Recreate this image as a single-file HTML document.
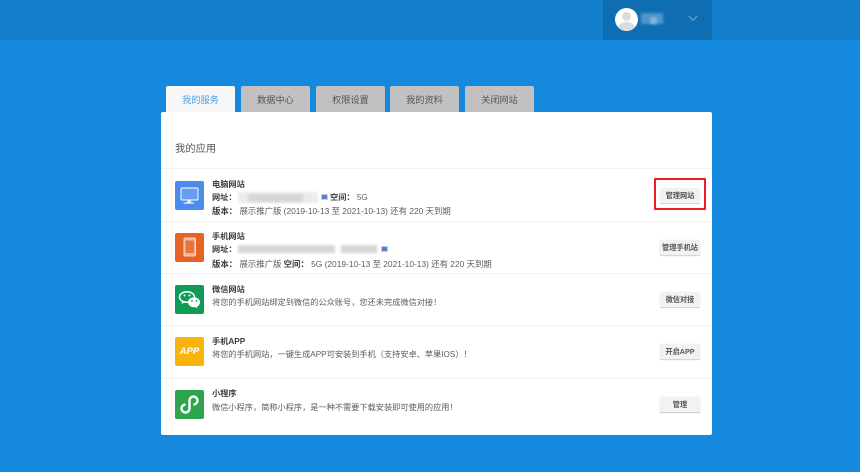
<!DOCTYPE html>
<html lang="zh"><head><meta charset="utf-8"><title>我的服务</title>
<style>
html,body{margin:0;padding:0}
body{width:860px;height:472px;overflow:hidden;position:relative;background:#1589dd;font-family:"Liberation Sans","Noto Sans CJK SC",sans-serif;color:#555}
div,span{position:absolute;white-space:nowrap}
.hdr{left:0;top:0;width:860px;height:40px;background:#1480cd}
.user{left:603px;top:0;width:109px;height:40px;background:#0f6eb2}
.tab{top:86px;width:69px;height:26px;background:#c1c1c1;border-radius:2px 2px 0 0;font-size:9.2px;line-height:28px;text-align:center;color:#555;filter:blur(.25px)}
.card{left:161px;top:112px;width:551px;height:323px;background:#fff;border-radius:2px}
.hr{left:161px;width:551px;height:1px;background:#f2f2f2}
.ic{left:175px;width:29px;height:29px;border-radius:2px}
.ic svg{position:absolute;left:0;top:0}
.t{left:212px;font-size:8.2px;line-height:10px;color:#3c3c3c;font-weight:bold}
.l{left:212px;font-size:8.2px;line-height:10px;color:#5c5c5c}
.v{font-size:8.4px}
.l b{color:#3c3c3c}
.btn{left:660px;width:40px;height:15px;background:#f2f2f2;box-shadow:0 1px 1px #ccc,0 0 1px #ddd;border-radius:1px;font-size:7.2px;line-height:16px;text-align:center;font-weight:bold;color:#555;filter:blur(.2px)}
.bl{background:#d6d6d6;filter:blur(1.3px)}
.lk{width:7px;height:6px;background:#5b7fc4;border:1px solid #c3d0ea;box-sizing:border-box}
.txt{filter:blur(.28px)}
</style></head><body>
<div class="hdr"></div>
<div class="user"></div>
<div style="left:615px;top:8px;width:23px;height:23px;border-radius:50%;background:#fff;overflow:hidden">
<span style="left:7px;top:4px;width:9px;height:9px;border-radius:50%;background:#dcdcdc"></span>
<span style="left:3px;top:14px;width:17px;height:12px;border-radius:50%;background:#dcdcdc"></span>
</div>
<div style="left:641px;top:13px;width:22px;height:11px;background:#4f96ca;filter:blur(1.2px)"></div>
<div style="left:650px;top:17px;width:7px;height:7px;background:#80b4da;filter:blur(1px)"></div>
<svg style="position:absolute;left:688px;top:15px" width="10" height="7" viewBox="0 0 10 7"><path d="M.8 1 5 5.200 9.200 1" fill="none" stroke="#6fa8d0" stroke-width="1.100"/></svg>

<div class="tab" style="left:166px;background:#f7f7f7;color:#4a9fe6">我的服务</div>
<div class="tab" style="left:241px">数据中心</div>
<div class="tab" style="left:316px">权限设置</div>
<div class="tab" style="left:390px">我的资料</div>
<div class="tab" style="left:465px">关闭网站</div>

<div class="card"></div>
<div class="txt" style="left:175px;top:142px;font-size:10.3px;line-height:15px;color:#555">我的应用</div>
<div class="hr" style="top:168px"></div>
<div class="hr" style="top:221px"></div>
<div class="hr" style="top:273px"></div>
<div class="hr" style="top:325px"></div>
<div class="hr" style="top:378px"></div>

<div class="ic" style="top:181px;background:#4a8bec"><svg width="29" height="29" viewBox="0 0 29 29"><rect x="6" y="7" width="17" height="12" rx="1" fill="#689df0" stroke="#e3ecfb" stroke-width="1.200"/><path d="M13 19.500h3l.5 2h2.500v1.200h-10.500v-1.200h2.500z" fill="#e3ecfb"/></svg></div>
<div class="ic" style="top:233px;background:#e66225"><svg width="29" height="29" viewBox="0 0 29 29"><rect x="9" y="5" width="11.500" height="18" rx="1.500" fill="#f2b597" stroke="#f7d3c0"/><rect x="10.500" y="7.500" width="8.500" height="12.500" fill="#e8743c"/></svg></div>
<div class="ic" style="top:285px;background:#0d9b57"><svg width="29" height="29" viewBox="0 0 29 29"><ellipse cx="12" cy="12" rx="7.500" ry="5.300" fill="none" stroke="#fff" stroke-width="1.500"/><path d="M7 15.500l-.5 3.500 4-2z" fill="#fff"/><ellipse cx="19" cy="17.300" rx="6" ry="5" fill="#fff"/><path d="M21.500 21l1.500 2-4-1.200z" fill="#fff"/><circle cx="9.500" cy="10.500" r="1" fill="#fff"/><circle cx="14.500" cy="10.500" r="1" fill="#fff"/><circle cx="17" cy="16" r=".9" fill="#0d9b57"/><circle cx="21.500" cy="16" r=".9" fill="#0d9b57"/></svg></div>
<div class="ic" style="top:337px;background:#f9b40c;color:#fff;font:italic bold 9.500px/29px 'Liberation Sans',sans-serif;text-align:center">APP</div>
<div class="ic" style="top:390px;background:#2ea44c"><svg width="29" height="29" viewBox="0 0 29 29"><path d="M14.500 18.500V10.500a4 4 0 1 1 4 4M14.500 18.500a4 4 0 1 1-4-4" fill="none" stroke="#fff" stroke-width="2.400"/></svg></div>

<div class="txt t" style="top:180px">电脑网站</div>
<div class="txt l" style="top:193px"><b>网址：</b></div>
<div class="bl" style="left:238px;top:192px;width:80px;height:11px;background:#ececec"></div>
<div class="bl" style="left:248px;top:194px;width:55px;height:8px"></div>
<div class="lk" style="left:321px;top:194px"></div>
<div class="txt l" style="left:330px;top:193px"><b>空间：</b> 5G</div>
<div class="txt l v" style="top:206px"><b>版本：</b> 展示推广版 (2019-10-13 至 2021-10-13) 还有 220 天到期</div>

<div class="txt t" style="top:232px">手机网站</div>
<div class="txt l" style="top:245px"><b>网址：</b></div>
<div class="bl" style="left:238px;top:245px;width:97px;height:8px"></div>
<div class="bl" style="left:341px;top:245px;width:36px;height:8px"></div>
<div class="lk" style="left:381px;top:246px"></div>
<div class="txt l v" style="top:259px"><b>版本：</b> 展示推广版 <b>空间：</b> 5G (2019-10-13 至 2021-10-13) 还有 220 天到期</div>

<div class="txt t" style="top:285px">微信网站</div>
<div class="txt l" style="top:298px">将您的手机网站绑定到微信的公众账号，您还未完成微信对接！</div>

<div class="txt t" style="top:337px">手机APP</div>
<div class="txt l" style="top:350px">将您的手机网站，一键生成APP可安装到手机（支持安卓、苹果IOS）！</div>

<div class="txt t" style="top:389px">小程序</div>
<div class="txt l" style="top:403px">微信小程序，简称小程序，是一种不需要下载安装即可使用的应用！</div>

<div class="btn" style="top:188px">管理网站</div>
<div class="btn" style="top:240px">管理手机站</div>
<div class="btn" style="top:292px">微信对接</div>
<div class="btn" style="top:344px">开启APP</div>
<div class="btn" style="top:397px">管理</div>
<div style="left:654px;top:178px;width:52px;height:32px;border:2px solid #ee1c25;box-sizing:border-box;border-radius:1px"></div>
</body></html>
